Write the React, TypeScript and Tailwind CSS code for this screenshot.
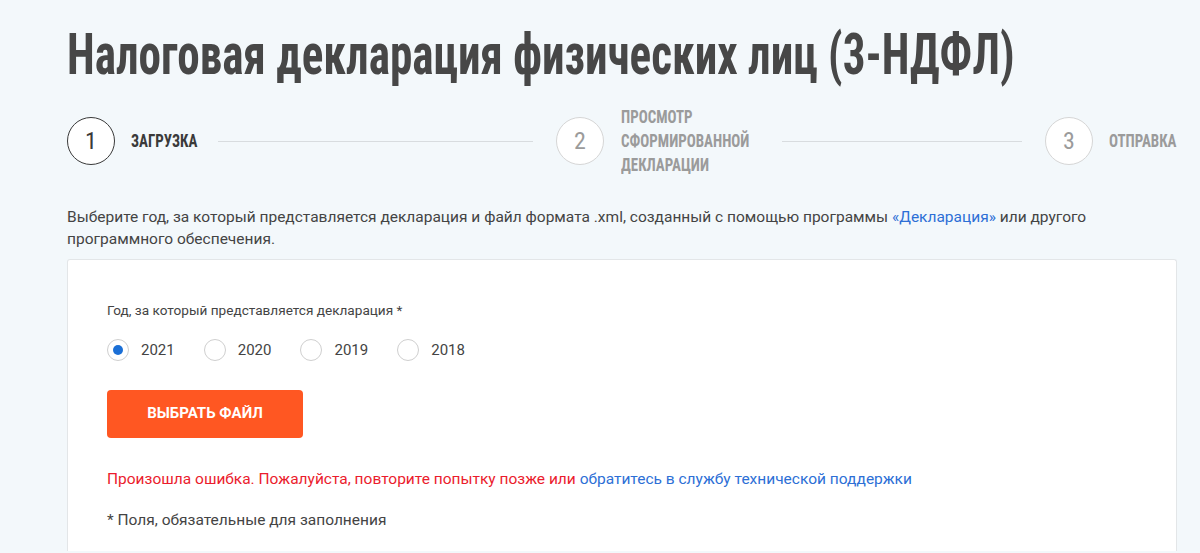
function Step({ n, active }: { n: string; active?: boolean }) {
  return (
    <div
      className={
        "flex h-[48px] w-[48px] shrink-0 items-center justify-center rounded-full border bg-white font-['Roboto_Condensed',sans-serif] text-[24px] " +
        (active ? "border-[#3a3a3a] text-[#3a3a3a]" : "border-[#d6d6d6] text-[#9b9b9b]")
      }
    >
      {n}
    </div>
  );
}

function Radio({ label, checked }: { label: string; checked?: boolean }) {
  return (
    <label className="flex items-center">
      <span className="flex h-[22px] w-[22px] items-center justify-center rounded-full border border-[#cfcfcf] bg-white">
        {checked && <span className="h-[10px] w-[10px] rounded-full bg-[#1b6fd6]" />}
      </span>
      <span className="ml-[12px] text-[15px] text-[#444]">{label}</span>
    </label>
  );
}

export default function App() {
  return (
    <div className="min-h-[553px] bg-[#f3f8fb] pl-[67px] pr-[23px] pt-[22px] font-['Roboto',sans-serif] text-[#444]">
      <h1 className="origin-left scale-x-[0.792] whitespace-nowrap font-['Roboto_Condensed',sans-serif] text-[57px] font-bold leading-[66px] text-[#474747]">
        Налоговая декларация физических лиц (3-НДФЛ)
      </h1>

      <div className="mt-[17px] flex items-center">
        <Step n="1" active />
        <div className="ml-[16px] w-[66px] shrink-0">
          <div className="origin-left scale-x-[0.83] whitespace-nowrap font-['Roboto_Condensed',sans-serif] text-[18px] font-bold uppercase leading-[24px] text-[#3a3a3a]">
            Загрузка
          </div>
        </div>
        <div className="ml-[21px] mr-[23px] h-px flex-1 bg-[#d8dcdf]" />
        <Step n="2" />
        <div className="ml-[17px] w-[126px] shrink-0">
          <div className="origin-left scale-x-[0.83] whitespace-nowrap font-['Roboto_Condensed',sans-serif] text-[18px] font-bold uppercase leading-[24px] text-[#9b9b9b]">
            <div>Просмотр</div>
            <div>сформированной</div>
            <div>декларации</div>
          </div>
        </div>
        <div className="ml-[35px] mr-[23px] h-px w-[240px] bg-[#d8dcdf]" />
        <Step n="3" />
        <div className="ml-[16px] w-[68px] shrink-0">
          <div className="origin-left scale-x-[0.83] whitespace-nowrap font-['Roboto_Condensed',sans-serif] text-[18px] font-bold uppercase leading-[24px] text-[#9b9b9b]">
            Отправка
          </div>
        </div>
      </div>

      <p className="mt-[29px] text-[15.5px] leading-[22px] text-[#444]">
        Выберите год, за который представляется декларация и файл формата .xml, созданный с помощью программы{" "}
        <a className="text-[#2d6fd6]">«Декларация»</a> или другого программного обеспечения.
      </p>

      <div className="mt-[9px] rounded-t-[3px] border border-b-0 border-[#e3e6e8] bg-white px-[39px] pb-[20px] pt-[40px]">
        <div className="text-[13.6px] leading-[20px] text-[#444]">Год, за который представляется декларация *</div>
        <div className="mt-[19px] flex gap-[29px]">
          <Radio label="2021" checked />
          <Radio label="2020" />
          <Radio label="2019" />
          <Radio label="2018" />
        </div>
        <button className="mt-[28px] flex h-[48px] w-[196px] items-center justify-center rounded-[4px] bg-[#ff5722] text-[15px] font-bold uppercase text-white">
          Выбрать файл
        </button>
        <p className="mt-[30px] text-[15.5px] leading-[22px] text-[#eb1c2d]">
          Произошла ошибка. Пожалуйста, повторите попытку позже или{" "}
          <a className="text-[#2d6fd6]">обратитесь в службу технической поддержки</a>
        </p>
        <p className="mt-[19px] text-[15.5px] leading-[22px] text-[#444]">* Поля, обязательные для заполнения</p>
      </div>
    </div>
  );
}
